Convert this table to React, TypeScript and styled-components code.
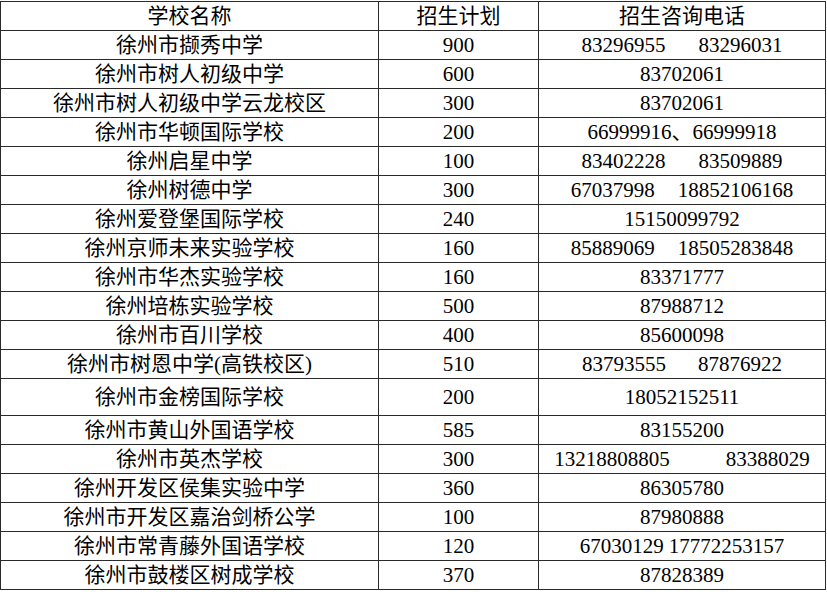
import React from "react";
import styled, { createGlobalStyle } from "styled-components";

const Global = createGlobalStyle`
  html, body { margin: 0; padding: 0; background: #fff; }
  body { font-family: "Liberation Serif", "Noto Sans CJK SC", serif; color: #000; }
`;

const Table = styled.div`
  display: grid;
  grid-template-columns: 378px 160px 287px;
  margin-top: 1px;
  width: 826px;
  border-top: 1px solid #2a2a2a;
  border-left: 1px solid #2a2a2a;
  box-sizing: border-box;
`;

const Cell = styled.div<{ $tall?: boolean }>`
  height: ${(p) => (p.$tall ? 36 : 28)}px;
  border-right: 1px solid #2a2a2a;
  border-bottom: 1px solid #2a2a2a;
  display: flex;
  align-items: center;
  justify-content: center;
  font-family: "Liberation Serif", "Noto Sans CJK SC", serif;
  font-size: 21px;
  line-height: 1;
  white-space: nowrap;
  color: #000;
`;

const Gap = styled.span<{ $w: number }>`
  display: inline-block;
  width: ${(p) => p.$w}px;
`;

type Row = { name: string; plan: string; phones: string[]; gap?: number; tall?: boolean };

const rows: Row[] = [
  { name: "徐州市撷秀中学", plan: "900", phones: ["83296955", "83296031"], gap: 33 },
  { name: "徐州市树人初级中学", plan: "600", phones: ["83702061"] },
  { name: "徐州市树人初级中学云龙校区", plan: "300", phones: ["83702061"] },
  { name: "徐州市华顿国际学校", plan: "200", phones: ["66999916、66999918"] },
  { name: "徐州启星中学", plan: "100", phones: ["83402228", "83509889"], gap: 33 },
  { name: "徐州树德中学", plan: "300", phones: ["67037998", "18852106168"], gap: 23 },
  { name: "徐州爱登堡国际学校", plan: "240", phones: ["15150099792"] },
  { name: "徐州京师未来实验学校", plan: "160", phones: ["85889069", "18505283848"], gap: 23 },
  { name: "徐州市华杰实验学校", plan: "160", phones: ["83371777"] },
  { name: "徐州培栋实验学校", plan: "500", phones: ["87988712"] },
  { name: "徐州市百川学校", plan: "400", phones: ["85600098"] },
  { name: "徐州市树恩中学(高铁校区)", plan: "510", phones: ["83793555", "87876922"], gap: 32 },
  { name: "徐州市金榜国际学校", plan: "200", phones: ["18052152511"], tall: true },
  { name: "徐州市黄山外国语学校", plan: "585", phones: ["83155200"] },
  { name: "徐州市英杰学校", plan: "300", phones: ["13218808805", "83388029"], gap: 56 },
  { name: "徐州开发区侯集实验中学", plan: "360", phones: ["86305780"] },
  { name: "徐州市开发区嘉治剑桥公学", plan: "100", phones: ["87980888"] },
  { name: "徐州市常青藤外国语学校", plan: "120", phones: ["67030129", "17772253157"], gap: 5 },
  { name: "徐州市鼓楼区树成学校", plan: "370", phones: ["87828389"] },
];

export default function App() {
  return (
    <>
      <Global />
      <Table>
        <Cell>学校名称</Cell>
        <Cell>招生计划</Cell>
        <Cell>招生咨询电话</Cell>
        {rows.map((r) => (
          <React.Fragment key={r.name}>
            <Cell $tall={r.tall}>{r.name}</Cell>
            <Cell $tall={r.tall}>{r.plan}</Cell>
            <Cell $tall={r.tall}>
              {r.phones.map((p, i) => (
                <React.Fragment key={p}>
                  {i > 0 && <Gap $w={r.gap ?? 5} />}
                  {p}
                </React.Fragment>
              ))}
            </Cell>
          </React.Fragment>
        ))}
      </Table>
    </>
  );
}
